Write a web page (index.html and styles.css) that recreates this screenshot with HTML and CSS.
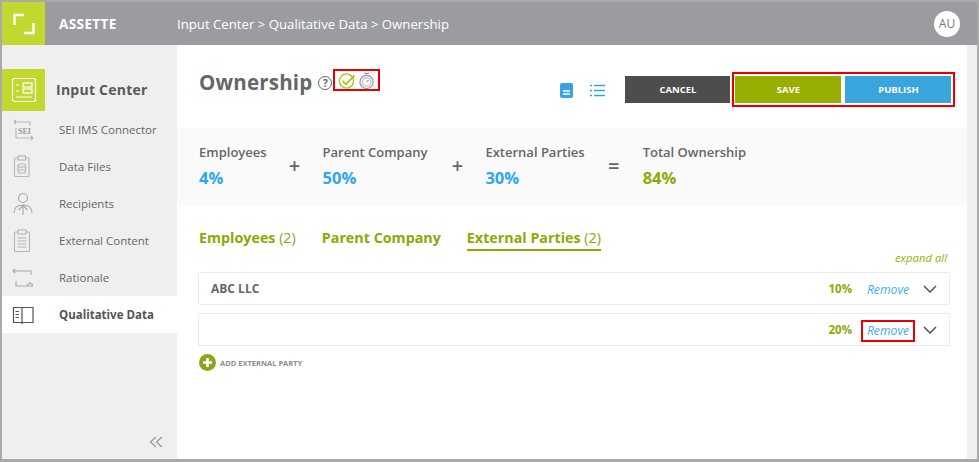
FILE: index.html
```html
<!DOCTYPE html>
<html lang="en">
<head>
<meta charset="utf-8">
<title>Ownership</title>
<link rel="stylesheet" href="styles.css">
</head>
<body>
<div class="window">
  <header class="topbar">
    <div class="logo">
      <svg width="22" height="22" viewBox="0 0 22 22" fill="none" stroke="#fff" stroke-width="2.4"><path d="M1.500 12V2H11"/><path d="M20.500 10V20H11"/></svg>
    </div>
    <div class="brand">ASSETTE</div>
    <div class="crumbs">Input Center &gt; Qualitative Data &gt; Ownership</div>
    <div class="avatar">AU</div>
  </header>
  <div class="body">
    <aside class="sidebar">
      <div class="side-head">
        <div class="side-tile">
          <svg width="26" height="26" viewBox="0 0 26 26" fill="none" stroke="#fff" stroke-width="1.200"><rect x="1.500" y="1.500" width="23" height="23" rx="2"/><path d="M5 8h3M5 14h3M5 20h16"/><rect x="12" y="6" width="9" height="4"/><rect x="12" y="12" width="9" height="4"/></svg>
        </div>
        <div class="side-title">Input Center</div>
      </div>
      <nav class="side-nav">
        <a class="nav-item">
          <svg class="nav-icon" width="24" height="24" viewBox="0 0 24 24" fill="none" stroke="#b5b5b5" stroke-width="1.100"><path d="M3 4h16v4M3 4l2-2M3 4l2 2M5 10v10h17M22 20l-2-2M22 20l-2 2"/><text x="7" y="16" font-family="Liberation Serif" font-size="8" fill="#9a9a9a" stroke="none" font-weight="700">SEI</text></svg>
          <span>SEI IMS Connector</span>
        </a>
        <a class="nav-item">
          <svg class="nav-icon" width="24" height="24" viewBox="0 0 24 24" fill="none" stroke="#b5b5b5" stroke-width="1.100"><rect x="3.500" y="3" width="14.500" height="18.500" rx="1"/><rect x="7" y="1" width="7.500" height="4" fill="#efefef"/><rect x="7" y="9" width="7.500" height="9" rx="2"/><path d="M7 12h7.500M7 15h7.500"/></svg>
          <span>Data Files</span>
        </a>
        <a class="nav-item">
          <svg class="nav-icon" width="24" height="24" viewBox="0 0 24 24" fill="none" stroke="#a8a8a8" stroke-width="1.100"><circle cx="12" cy="6" r="4.500"/><path d="M3 21c0-5 3-8 9-8s9 3 9 8M12 23V14M7.500 18l4.500-4.500 4.500 4.500"/></svg>
          <span>Recipients</span>
        </a>
        <a class="nav-item">
          <svg class="nav-icon" width="24" height="24" viewBox="0 0 24 24" fill="none" stroke="#b5b5b5" stroke-width="1.100"><rect x="3.500" y="3" width="15" height="19.500" rx="1"/><rect x="7" y="1" width="8" height="4" fill="#efefef"/><path d="M6.500 9h9M6.500 12h9M6.500 15h9M6.500 18h9"/></svg>
          <span>External Content</span>
        </a>
        <a class="nav-item">
          <svg class="nav-icon" width="24" height="24" viewBox="0 0 24 24" fill="none" stroke="#a8a8a8" stroke-width="1.100"><path d="M2 5h18v4M2 5l2-2M2 5l2 2M5 15v5h17M16 19l3-2 3 2"/></svg>
          <span>Rationale</span>
        </a>
        <a class="nav-item nav-active">
          <svg class="nav-icon" width="24" height="24" viewBox="0 0 24 24" fill="none" stroke="#555" stroke-width="1.200"><path d="M11 4.500H2.500v15H11M11 4.500h11v15H11M11 4.500V21"/><path d="M4.500 8.500H8M4.500 11.500H8M4.500 14.500H8"/></svg>
          <span>Qualitative Data</span>
        </a>
      </nav>
      <div class="collapse">
        <svg width="14" height="12" viewBox="0 0 14 12" fill="none" stroke="#999" stroke-width="1.300"><path d="M7 1L1.500 6 7 11M13 1L7.500 6 13 11"/></svg>
      </div>
    </aside>
    <main class="main">
      <div class="page-head">
        <h1 class="page-title">Ownership</h1>
        <span class="help">?</span>
        <div class="status marked">
          <svg width="20" height="19" viewBox="0 0 20 19" fill="none"><circle cx="9" cy="10" r="7.500" stroke="#a4c31f" stroke-width="1.400"/><path d="M5 10l3.500 3.500L17.500 4" stroke="#a4c31f" stroke-width="1.900"/></svg>
          <svg width="16" height="19" viewBox="0 0 16 19" fill="none" stroke="#9a9a9a"><circle cx="8" cy="11" r="7" stroke-width="1.300"/><circle cx="8" cy="11" r="4.500" stroke="#c4c4c4" stroke-width="1.500"/><path d="M5.500 2h5M8 2v2M8 11l2-2" stroke-width="1.200"/></svg>
        </div>
        <div class="view-icons">
          <svg width="13" height="15" viewBox="0 0 13 15"><rect width="13" height="15" rx="2" fill="#39a3e6"/><path d="M3 8h7M3 11h7" stroke="#fff" stroke-width="1.300"/></svg>
          <svg width="15" height="13" viewBox="0 0 15 13" stroke="#39a3e6" stroke-width="1.300"><path d="M4 1.500h11M4 6.500h11M4 11.500h11M0 1.500h2M0 6.500h2M0 11.500h2"/></svg>
        </div>
        <button class="btn btn-cancel">CANCEL</button>
        <div class="btn-group marked">
          <button class="btn btn-save">SAVE</button>
          <button class="btn btn-publish">PUBLISH</button>
        </div>
      </div>
      <section class="summary">
        <div class="metric"><div class="metric-label">Employees</div><div class="metric-value">4%</div></div>
        <div class="op op-a">+</div>
        <div class="metric"><div class="metric-label">Parent Company</div><div class="metric-value">50%</div></div>
        <div class="op op-b">+</div>
        <div class="metric"><div class="metric-label">External Parties</div><div class="metric-value">30%</div></div>
        <div class="op op-c">=</div>
        <div class="metric"><div class="metric-label">Total Ownership</div><div class="metric-value metric-total">84%</div></div>
      </section>
      <div class="tabs">
        <div class="tab">Employees <span class="tab-count">(2)</span></div>
        <div class="tab">Parent Company</div>
        <div class="tab tab-active">External Parties <span class="tab-count">(2)</span></div>
      </div>
      <div class="expand-row">expand all</div>
      <div class="rows">
        <div class="row">
          <div class="row-name">ABC LLC</div>
          <div class="row-pct">10%</div>
          <div class="row-remove">Remove</div>
          <svg class="chev" width="14" height="8" viewBox="0 0 14 8" fill="none" stroke="#555" stroke-width="1.500"><path d="M1 1l6 6 6-6"/></svg>
        </div>
        <div class="row">
          <div class="row-name"></div>
          <div class="row-pct">20%</div>
          <div class="row-remove marked">Remove</div>
          <svg class="chev" width="14" height="8" viewBox="0 0 14 8" fill="none" stroke="#555" stroke-width="1.500"><path d="M1 1l6 6 6-6"/></svg>
        </div>
      </div>
      <div class="add-row">
        <svg width="17" height="17" viewBox="0 0 17 17"><circle cx="8.500" cy="8.500" r="8.500" fill="#8ea41e"/><path d="M8.500 4v9M4 8.500h9" stroke="#fff" stroke-width="2.600"/></svg>
        <span>ADD EXTERNAL PARTY</span>
      </div>
    </main>
    <div class="scrollbar"></div>
  </div>
</div>
</body>
</html>
```
FILE: styles.css
```css
* { box-sizing: border-box; }
html, body { margin: 0; padding: 0; }
body { width: 979px; height: 462px; overflow: hidden; background: #fff; font-family: "Open Sans", sans-serif; }
.window { width: 979px; height: 462px; border: 2px solid #a9a9a9; border-bottom-width: 3px; display: flex; flex-direction: column; background: #fff; }
.topbar { height: 43px; flex: none; display: flex; align-items: center; background: #9b9ca0; color: #fff; }
.logo { width: 43px; height: 43px; background: #c1d82f; display: flex; align-items: center; justify-content: center; }
.brand { margin-left: 14px; width: 118px; font-size: 13.500px; font-weight: 700; letter-spacing: .4px; }
.crumbs { font-size: 13.200px; flex: 1; }
.avatar { width: 26px; height: 26px; margin-right: 17px; border-radius: 50%; background: #fff; color: #77787c; font-size: 12px; display: flex; align-items: center; justify-content: center; }
.body { flex: 1; display: flex; min-height: 0; }
.sidebar { width: 175px; flex: none; background: #efefef; display: flex; flex-direction: column; padding-top: 24px; }
.side-head { display: flex; align-items: center; height: 42px; }
.side-tile { width: 43px; height: 42px; background: #c1d82f; display: flex; align-items: center; justify-content: center; }
.side-title { margin: 0 0 2px 11px; font-size: 14px; font-weight: 700; color: #58595b; letter-spacing: .25px; }
.side-nav { display: flex; flex-direction: column; }
.nav-item { height: 37px; display: flex; align-items: center; padding-left: 9px; font-size: 11.500px; color: #666; }
.nav-item span { margin-left: 24px; }
.nav-icon { flex: none; }
.nav-active { background: #fff; color: #555; font-weight: 700; }
.collapse { margin-top: auto; height: 23px; display: flex; justify-content: flex-end; padding: 0 14px 0 0; align-items: flex-start; }
.main { flex: 1; min-width: 0; display: flex; flex-direction: column; }
.page-head { height: 83px; flex: none; display: flex; align-items: flex-start; padding: 25px 0 0 22px; }
.page-title { margin: -1px 0 0; font-size: 20.500px; line-height: 26px; font-weight: 700; color: #666; letter-spacing: .2px; }
.help { width: 14px; height: 14px; margin: 6px 0 0 6px; border: 1px solid #666; border-radius: 50%; font-size: 10px; font-weight: 700; line-height: 12px; text-align: center; color: #666; }
.marked { border: 2px solid #e60000; }
.status { display: flex; align-items: center; gap: 2px; height: 22px; margin: -1px 0 0 1px; padding: 0 4px 0 3px; width: 47px; flex: none; }
.view-icons { display: flex; align-items: center; gap: 17px; margin: 13px 0 0 180px; height: 15px; }
.btn { border: 0; height: 27px; color: #fff; font: 700 9.500px "Open Sans", sans-serif; padding: 0; }
.btn-cancel { width: 105px; margin: 6px 0 0 20px; background: #4d4d4d; flex: none; }
.btn-group { display: flex; gap: 4px; height: 35px; width: 223px; margin: 2px 0 0 2px; padding: 2px 0 0 1px; background: #fff; box-shadow: 0 0 0 1px #f2f2f2; flex: none; }
.btn-save { width: 106px; background: #99ae03; }
.btn-publish { width: 106px; background: #39a5dd; }
.summary { height: 78px; flex: none; display: flex; align-items: flex-start; background: #fafafa; padding: 16px 0 0 22px; }
.metric-label { font-size: 13px; line-height: 17px; font-weight: 600; color: #666; }
.metric-value { margin-top: 7px; font-size: 16.500px; line-height: 20px; font-weight: 700; color: #2ea6f2; }
.metric-total { color: #8fa805; }
.op { width: 12px; margin-top: 10px; font-size: 20px; line-height: 24px; font-weight: 600; color: #666; text-align: center; }
.op-a { margin-left: 22px; margin-right: 22px; }
.op-b { margin-left: 24px; margin-right: 22px; }
.op-c { margin-left: 23px; margin-right: 23px; }
.tabs { display: flex; gap: 26px; padding: 21px 0 0 22px; flex: none; }
.tab { font-size: 14.300px; line-height: 21px; height: 24px; font-weight: 700; color: #8fa805; }
.tab-count { font-weight: 400; }
.tab-active { border-bottom: 2px solid #8fa805; }
.expand-row { flex: none; padding-right: 20px; text-align: right; font-size: 11.300px; line-height: 15px; height: 22px; margin-top: -1px; font-style: italic; color: #99ae03; }
.rows { flex: none; display: flex; flex-direction: column; gap: 8px; padding: 0 17px 0 21px; }
.row { height: 33px; border: 1px solid #ececec; border-radius: 2px; display: flex; align-items: center; padding: 0 12px; background: #fff; }
.row-name { flex: 1; font-size: 12px; font-weight: 700; color: #666; }
.row-pct { font-size: 11.500px; font-weight: 700; color: #8fa805; }
.row-remove { width: 54px; height: 22px; margin: 2px 0 0 9px; font-size: 12.200px; font-style: italic; color: #3fa9f5; text-align: center; border: 2px solid transparent; line-height: 17px; }
.row-remove.marked { border-color: #e60000; }
.chev { margin-left: 8px; }
.add-row { flex: none; display: flex; align-items: center; gap: 4px; padding: 8px 0 0 22px; font-size: 7.500px; font-weight: 700; color: #8c8c8c; }
.scrollbar { width: 10px; flex: none; background: #f0f0f0; }
```
